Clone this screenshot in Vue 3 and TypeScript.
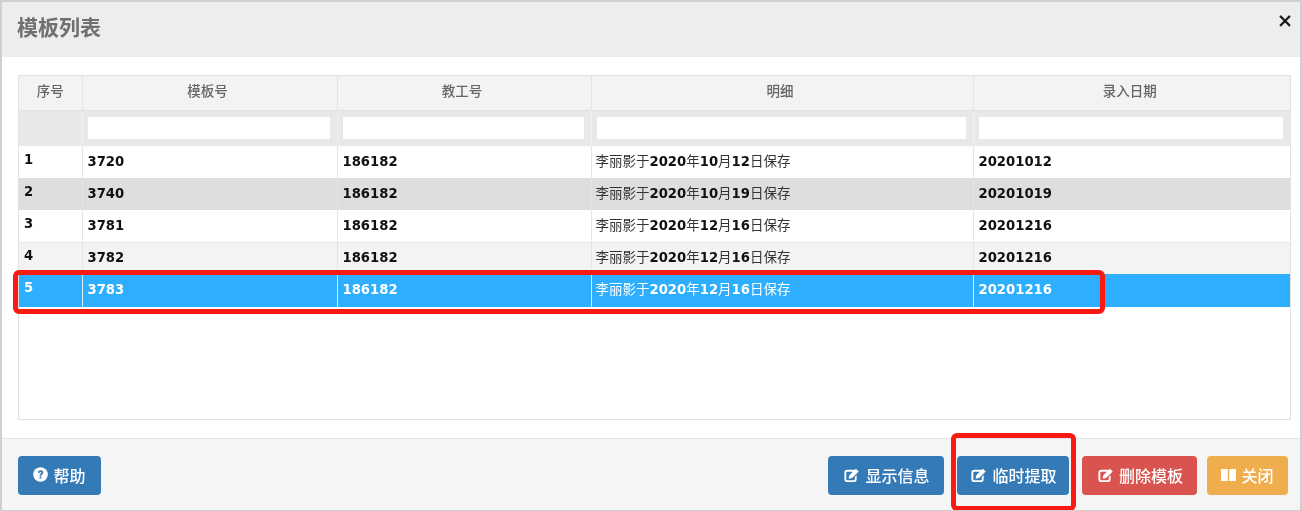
<script setup lang="ts">
interface Row { no: string; tpl: string; tea: string; month: string; day: string; date: string }
const rows: Row[] = [
  { no: '1', tpl: '3720', tea: '186182', month: '10', day: '12', date: '20201012' },
  { no: '2', tpl: '3740', tea: '186182', month: '10', day: '19', date: '20201019' },
  { no: '3', tpl: '3781', tea: '186182', month: '12', day: '16', date: '20201216' },
  { no: '4', tpl: '3782', tea: '186182', month: '12', day: '16', date: '20201216' },
  { no: '5', tpl: '3783', tea: '186182', month: '12', day: '16', date: '20201216' },
]
const heads = ['序号', '模板号', '教工号', '明细', '录入日期']
const editPath = 'M5 3h7.5v2H5a1 1 0 0 0-1 1v7a1 1 0 0 0 1 1h7a1 1 0 0 0 1-1v-2.5l2-2V13a3 3 0 0 1-3 3H5a3 3 0 0 1-3-3V6a3 3 0 0 1 3-3zM14.2 1.8l3 3L10.2 11.8l-3.8.8.8-3.8z'
const actions = [
  { label: '显示信息', cls: 'primary wide1' },
  { label: '临时提取', cls: 'primary wide2' },
  { label: '删除模板', cls: 'danger wide3' },
]
</script>

<template>
  <div class="page">
    <div class="dialog">
      <header class="head">
        <h1>模板列表</h1>
        <span class="close">×</span>
      </header>
      <main class="body">
        <div class="grid">
          <table>
            <colgroup>
              <col style="width: 63px" />
              <col style="width: 255px" />
              <col style="width: 254px" />
              <col style="width: 382px" />
              <col />
            </colgroup>
            <thead>
              <tr class="titles">
                <th v-for="h in heads" :key="h">{{ h }}</th>
              </tr>
              <tr class="filters">
                <th></th>
                <th v-for="i in 4" :key="i"><input type="text" /></th>
              </tr>
            </thead>
            <tbody>
              <tr v-for="(r, i) in rows" :key="r.no" :class="['r' + i]">
                <td class="no">{{ r.no }}</td>
                <td>{{ r.tpl }}</td>
                <td>{{ r.tea }}</td>
                <td class="detail"><span>李丽影于</span>2020<span>年</span>{{ r.month }}<span>月</span>{{ r.day }}<span>日保存</span></td>
                <td>{{ r.date }}</td>
              </tr>
            </tbody>
          </table>
        </div>
      </main>
      <footer class="foot">
        <button class="btn primary help">
          <svg width="15" height="15" viewBox="0 0 16 16"><circle cx="8" cy="8" r="7.8" fill="#fff" /><path d="M5.2 6.2C5.3 4.5 6.5 3.5 8.1 3.5c1.7 0 2.9 1 2.9 2.4 0 1.1-.6 1.7-1.3 2.2-.5.4-.7.6-.7 1.2H7c0-1.1.3-1.6 1-2.1.6-.4.9-.7.9-1.1 0-.5-.4-.8-.9-.8-.6 0-.9.4-1 1zM7 10.1h2V12.2H7z" fill="#337ab7" /></svg>
          <span>帮助</span>
        </button>
        <div class="right">
          <button v-for="a in actions" :key="a.label" :class="['btn', a.cls]">
            <svg width="18" height="16" viewBox="0 0 18 17"><path :d="editPath" fill="currentColor" /></svg>
            <span>{{ a.label }}</span>
          </button>
          <button class="btn warning">
            <svg width="15" height="14" viewBox="0 0 15 14"><path d="M0 1h6.8v12H0zM8.2 1H15v12H8.2z" fill="currentColor" /></svg>
            <span>关闭</span>
          </button>
        </div>
      </footer>
    </div>
    <div class="mark mark-row"></div>
    <div class="mark mark-btn"></div>
  </div>
</template>

<style>
html, body { margin: 0; background: #fff; }
</style>

<style scoped>
.page {
  position: relative;
  width: 1302px;
  height: 511px;
  overflow: hidden;
  box-sizing: border-box;
  border: 2px solid #cfcfcf;
  border-bottom-width: 1px;
  font-family: "Liberation Sans", "Noto Sans CJK SC", sans-serif;
  filter: blur(0.4px);
}
.dialog {
  height: 100%;
  display: flex;
  flex-direction: column;
  background: #fff;
}
.head {
  height: 55px;
  flex: none;
  background: #eeecec;
  display: flex;
  justify-content: space-between;
  box-sizing: border-box;
  padding: 0 8px 0 15px;
}
.head h1 {
  margin: 11px 0 0;
  font-size: 21px;
  line-height: 30px;
  font-weight: 700;
  color: #707070;
}
.close {
  font-size: 24px;
  line-height: 24px;
  margin-top: 7px;
  color: #111;
  font-weight: 400;
  -webkit-text-stroke: 0.5px #111;
}
.body {
  flex: 1;
  padding: 18px 9px 18px 16px;
  box-sizing: border-box;
  min-height: 0;
}
.grid {
  height: 100%;
  box-sizing: border-box;
  border: 1px solid #e2e2e2;
}
table {
  width: 100%;
  table-layout: fixed;
  border-collapse: collapse;
  font-family: "DejaVu Sans", "Noto Sans CJK SC", sans-serif;
  font-size: 13.2px;
}
th {
  background: #f3f3f3;
  border-left: 1px solid #e4e4e4;
  padding: 0;
  font-family: "Liberation Sans", "Noto Sans CJK SC", sans-serif;
  font-weight: 500;
  color: #666;
  font-size: 13.5px;
}
th:first-child, td:first-child { border-left: none; }
.titles th {
  height: 34px;
  padding: 0 4px 5px 0;
  box-sizing: border-box;
}
.titles th:first-child { padding-right: 0; }
.filters th {
  height: 36px;
  background: #e8e8e8;
  border-top: 1px solid #e0e0e0;
  border-left-color: #f0f0f0;
  box-sizing: border-box;
  text-align: left;
  padding: 0 7px 0 5px;
}
.filters input {
  display: block;
  width: 100%;
  height: 22px;
  border: 0;
  padding: 0;
  box-sizing: border-box;
  background: #fff;
  border-radius: 1px;
}
td {
  height: 32px;
  box-sizing: border-box;
  padding: 0 4px 1px 5px;
  line-height: 16px;
  font-weight: 700;
  color: #111;
  border-left: 1px solid #e4e4e4;
  white-space: nowrap;
}
.no { padding: 0 0 5px 5px; }
.detail { padding: 0 4px 3px; }
.detail span { font-weight: 400; font-size: 13.5px; color: #333; font-family: "Noto Sans CJK SC", sans-serif; }
.r1 td { background: #dedede; }
.r2 td { padding-top: 1px; }
.r3 td { background: #f3f3f3; border-top: 1px solid #e8e8e8; }
.r4 td { background: #2eaeff; color: #fff; border-left-color: #d8effd; height: 33px; }
.r4 .detail span { color: #fff; }
.foot {
  height: 72px;
  flex: none;
  background: #f5f5f5;
  border-top: 1px solid #e6e6e6;
  box-sizing: border-box;
  padding: 17px 12px 0 16px;
  display: flex;
  justify-content: space-between;
  align-items: flex-start;
}
.right {
  display: flex;
}
.btn {
  height: 39px;
  border: 0;
  border-radius: 4px;
  color: #fff;
  font: inherit;
  font-size: 16px;
  font-weight: 500;
  display: flex;
  align-items: center;
  justify-content: center;
  gap: 5px;
  padding: 0 0 2px;
}
.help { width: 83px; }
.primary { background: #337ab7; }
.danger { background: #d9534f; }
.warning { background: #f0ad4e; width: 81px; margin-left: 10px; }
.wide1 { width: 116px; }
.wide2 { width: 112px; margin: 0 13px; }
.wide3 { width: 115px; }
.mark {
  position: absolute;
  box-sizing: border-box;
  border: 5px solid #fb1a12;
  border-radius: 6px;
}
.mark-row { left: 11px; top: 268px; width: 1092px; height: 44px; }
.mark-btn { left: 949px; top: 431px; width: 125px; height: 78px; }
</style>
